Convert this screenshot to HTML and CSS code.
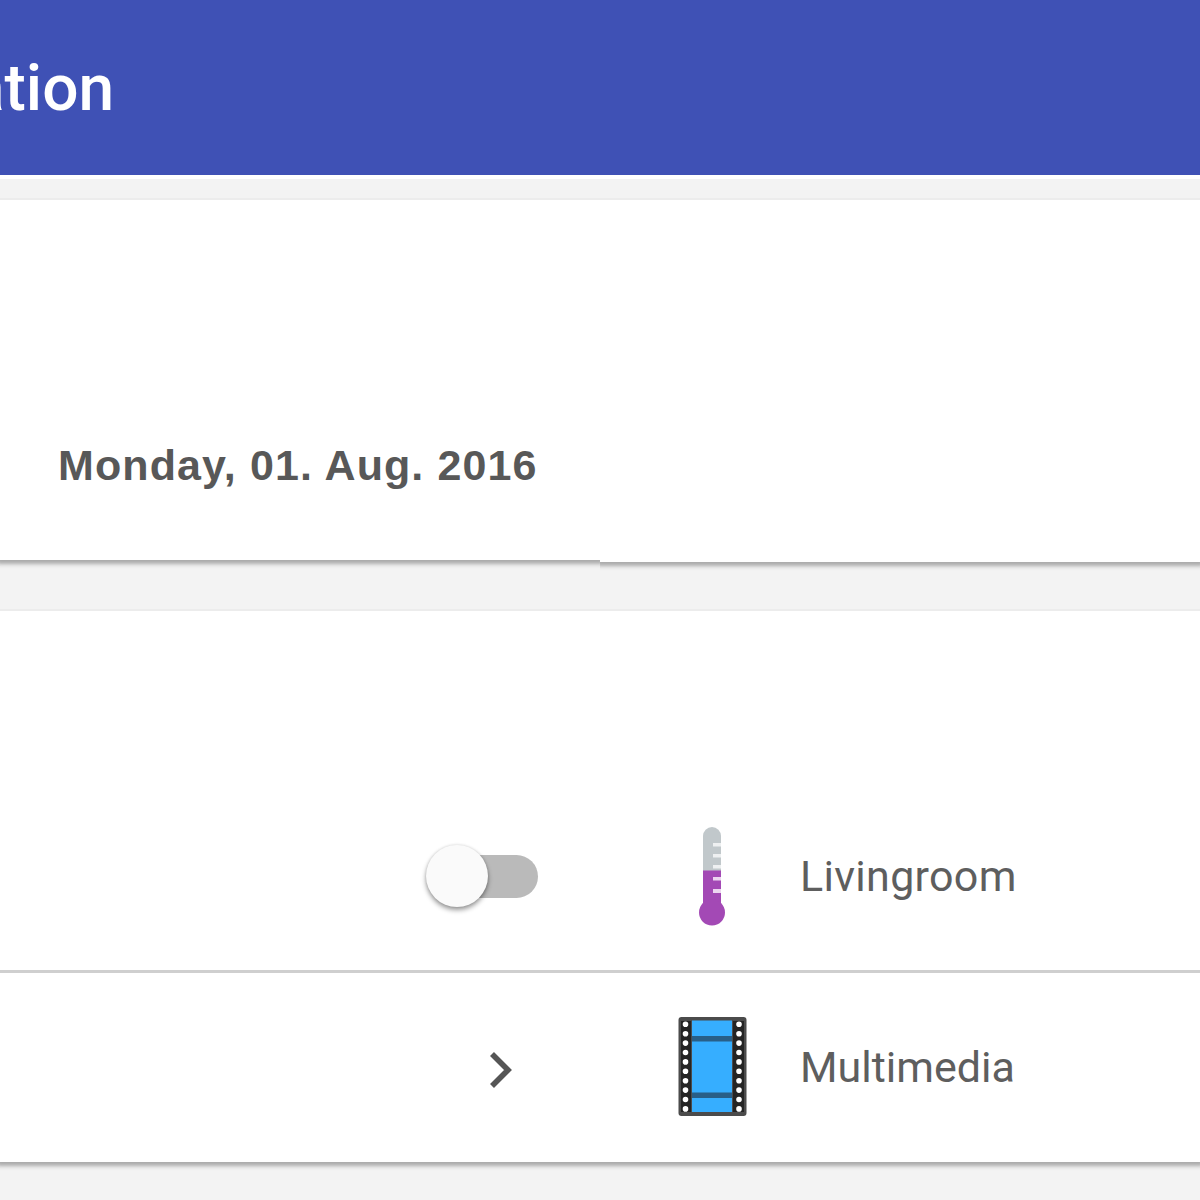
FILE: index.html
```html
<!DOCTYPE html>
<html lang="en">
<head>
<meta charset="utf-8">
<title>Home automation</title>
<link rel="stylesheet" href="styles.css">
</head>
<body>
<header class="bar"><h1 class="title">ation</h1></header>
<main class="content">
  <section class="card-row">
    <div class="card date-card"><time class="date">Monday, 01. Aug. 2016</time></div>
    <div class="card side-card"></div>
  </section>
  <section class="card list-card">
    <div class="item">
      <div class="action"><span class="switch"><span class="knob"></span></span></div>
      <svg class="icon" width="80" height="110" viewBox="0 0 80 110">
        <path d="M31 50V15a9 9 0 0 1 18 0v35z" fill="#c1c8cb"/>
        <path d="M31 49.500h18V89.500H31z" fill="#a349b5"/>
        <circle cx="40" cy="91.500" r="13" fill="#a349b5"/>
        <path d="M41 22h8v3.500h-8zM41 33h8v3.500h-8zM41 44h8v3.500h-8z" fill="#eef0f1"/>
        <path d="M41 56h8v3.500h-8zM41 68h8v4h-8z" fill="#ecd5f0"/>
      </svg>
      <span class="label label-livingroom">Livingroom</span>
    </div>
    <div class="item">
      <div class="action"><svg class="chevron" width="28" height="40" viewBox="0 0 28 40"><path d="M4 4l16 16L4 36" fill="none" stroke="#555" stroke-width="5.600"/></svg></div>
      <svg class="icon" width="80" height="110" viewBox="0 0 80 110">
        <rect x="6.500" y="5" width="68" height="99" rx="3" fill="#4b4b4b"/>
        <path d="M9 9h10v91H9zM61 9h11v91H61z" fill="#242424"/>
        <rect x="20" y="8.500" width="40" height="91.500" fill="#36aeff"/>
        <path d="M20 24h40v5.500H20zM20 80.500h40v5.500H20z" fill="#285f88"/>
        <path d="M13.500 12.300v85M67 12.300v85" fill="none" stroke="#fff" stroke-width="5.600" stroke-linecap="round" stroke-dasharray="0 9.400"/>
      </svg>
      <span class="label">Multimedia</span>
    </div>
  </section>
</main>
</body>
</html>
```
FILE: styles.css
```css
* { box-sizing: border-box; }
body {
  margin: 0;
  height: 1200px;
  overflow: hidden;
  background: #f3f3f3;
  color: #5e5e5e;
  font-family: Roboto, "Liberation Sans", sans-serif;
}
.bar {
  height: 179px;
  background: #3f51b5;
  border-bottom: 4px solid #fff;
  overflow: hidden;
}
.title {
  margin: 56px 0 0 -30px;
  color: #fff;
  font-size: 64px;
  font-weight: 500;
  line-height: 66px;
}
.content { padding-top: 21px; }
.card {
  background: #fff;
  box-shadow: 0 1px 4px 3px #aaa, 0 -1px 2px 1px #e9e9e9;
  clip-path: inset(0 0 -12px 0);
}
.card-row, .list-card { border-top: 2px solid #ececec; }
.card-row { display: flex; align-items: flex-start; margin-top: -2px; }
.date-card { width: 600px; height: 360px; padding: 239px 0 0 58px; }
.side-card { width: 600px; height: 362px; }
.date {
  display: block;
  color: #585858;
  font-family: "Liberation Sans", Arial, sans-serif;
  font-size: 43px;
  font-weight: 700;
  line-height: 52px;
  letter-spacing: 1.1px;
  white-space: nowrap;
}
.list-card { margin-top: 47px; height: 553px; padding-top: 170px; }
.item {
  display: grid;
  grid-template-columns: 672px 128px 1fr;
  align-items: center;
  height: 189px;
}
.item + .item { border-top: 3px solid #cfcfcf; height: 191px; }
.action { display: flex; justify-content: flex-end; }
.switch {
  display: flex;
  align-items: center;
  width: 102px;
  height: 43px;
  margin: 2px 134px 0 0;
  border-radius: 22px;
  background: #bababa;
}
.knob {
  flex: none;
  width: 62px;
  height: 62px;
  margin: -1px 0 0 -10px;
  border-radius: 50%;
  background: #fafafa;
  box-shadow: 0 3px 5px rgba(0, 0, 0, .4), 0 0 3px rgba(0, 0, 0, .12);
}
.chevron { margin-right: 156px; margin-top: 6px; }
.label { font-size: 43px; line-height: 52px; }
.label-livingroom { letter-spacing: .3px; }
```
